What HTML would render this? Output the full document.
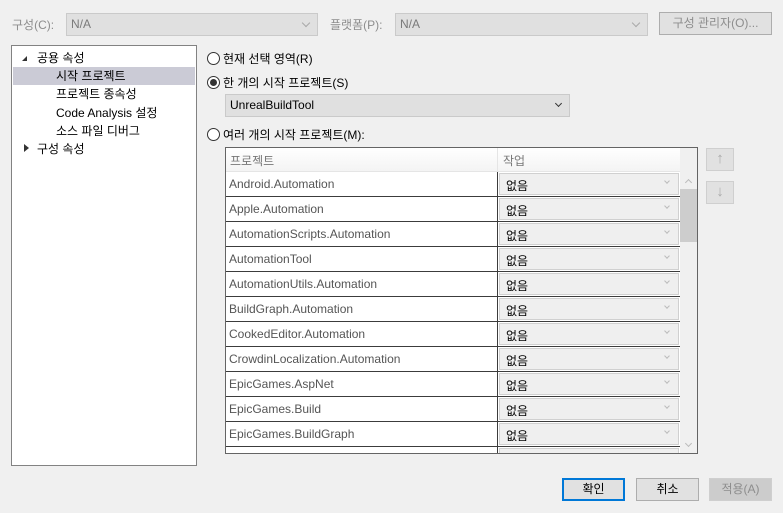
<!DOCTYPE html><html><head><meta charset="utf-8"><style>
*{box-sizing:border-box;margin:0;padding:0}
body{width:783px;height:513px;background:#f0f0f0;font-family:"Liberation Sans","Noto Sans CJK KR",sans-serif;font-size:12px;color:#000;position:relative;overflow:hidden}
.a{position:absolute;white-space:nowrap}
.dis{color:#8d8d8d}
.combo{position:absolute;background:#e0e0e0;border:1px solid #cacaca;height:23px;padding:3px 4px;color:#7a7a7a}
.chev{position:absolute;right:8px;top:6px;width:6px;height:6px;border-right:1px solid #a8a8a8;border-bottom:1px solid #a8a8a8;transform:rotate(45deg)}
.radio{position:absolute;width:13px;height:13px;border:1px solid #333;border-radius:50%;background:#fff}
.radio.on::after{content:"";position:absolute;left:2px;top:2px;width:7px;height:7px;border-radius:50%;background:#333}
.btn{position:absolute;height:23px;background:#e1e1e1;border:1px solid #adadad;text-align:center;line-height:21px}
.row{position:absolute;left:226px;width:454px;height:25px;border-bottom:1px solid #3c3c3c;background:#fff;overflow:hidden}
.row .n{position:absolute;left:3px;top:5px;color:#555}
.row .c{position:absolute;left:271px;top:0;width:1px;height:25px;background:#3c3c3c}
.row .d{position:absolute;left:273px;top:1px;width:180px;height:22px;background:#efefef;border:1px solid #d0d0d0;padding:3px 6px}
.row .d i{position:absolute;right:9px;top:5px;width:4px;height:4px;border-right:1px solid #bbb;border-bottom:1px solid #bbb;transform:rotate(45deg)}
</style></head><body>
<div class="a dis" style="left:12px;top:16px">구성(C):</div>
<div class="combo" style="left:66px;top:13px;width:252px">N/A<span class="chev"></span></div>
<div class="a dis" style="left:330px;top:16px">플랫폼(P):</div>
<div class="combo" style="left:395px;top:13px;width:253px">N/A<span class="chev"></span></div>
<div class="btn dis" style="left:659px;top:12px;width:113px">구성 관리자(O)...</div>

<div class="a" style="left:11px;top:45px;width:186px;height:421px;background:#fff;border:1px solid #828282"></div>
<div class="a" style="left:13px;top:67px;width:182px;height:18px;background:#cbcbd6"></div>
<div class="a" style="left:22px;top:56px;width:0;height:0;border-left:5px solid transparent;border-bottom:5px solid #333"></div>
<div class="a" style="left:37px;top:49px">공용 속성</div>
<div class="a" style="left:56px;top:67px">시작 프로젝트</div>
<div class="a" style="left:56px;top:85px">프로젝트 종속성</div>
<div class="a" style="left:56px;top:104px">Code Analysis 설정</div>
<div class="a" style="left:56px;top:122px">소스 파일 디버그</div>
<div class="a" style="left:24px;top:144px;width:0;height:0;border-top:4px solid transparent;border-bottom:4px solid transparent;border-left:5px solid #333"></div>
<div class="a" style="left:37px;top:140px">구성 속성</div>

<div class="radio" style="left:207px;top:52px"></div>
<div class="a" style="left:223px;top:50px">현재 선택 영역(R)</div>
<div class="radio on" style="left:207px;top:76px"></div>
<div class="a" style="left:223px;top:74px">한 개의 시작 프로젝트(S)</div>
<div class="combo" style="left:225px;top:94px;width:345px;height:23px;color:#000">UnrealBuildTool<span class="chev" style="border-color:#333;width:5px;height:5px"></span></div>
<div class="radio" style="left:207px;top:128px"></div>
<div class="a" style="left:223px;top:126px">여러 개의 시작 프로젝트(M):</div>

<div class="a" style="left:225px;top:147px;width:473px;height:307px;border:1px solid #646464;background:#f0f0f0;overflow:hidden"></div>
<div class="a" style="left:226px;top:148px;width:454px;height:24px;background:linear-gradient(#fff,#f4f4f4);border-bottom:1px solid #e5e5e5"></div>
<div class="a" style="left:497px;top:148px;width:1px;height:24px;background:#e5e5e5"></div>
<div class="a" style="left:230px;top:152px;color:#777">프로젝트</div>
<div class="a" style="left:503px;top:152px;color:#777">작업</div>
<div class="a" style="left:680px;top:172px;width:17px;height:281px;background:#f0f0f0"></div>
<div class="a" style="left:680px;top:189px;width:17px;height:53px;background:#cdcdcd"></div>
<div class="a" style="left:686px;top:180px;width:5px;height:5px;border-left:1px solid #bbb;border-top:1px solid #bbb;transform:rotate(45deg)"></div>
<div class="a" style="left:686px;top:441px;width:5px;height:5px;border-right:1px solid #bbb;border-bottom:1px solid #bbb;transform:rotate(45deg)"></div>

<div class="row" style="top:172px"><span class="n">Android.Automation</span><span class="c"></span><span class="d">없음<i></i></span></div>
<div class="row" style="top:197px"><span class="n">Apple.Automation</span><span class="c"></span><span class="d">없음<i></i></span></div>
<div class="row" style="top:222px"><span class="n">AutomationScripts.Automation</span><span class="c"></span><span class="d">없음<i></i></span></div>
<div class="row" style="top:247px"><span class="n">AutomationTool</span><span class="c"></span><span class="d">없음<i></i></span></div>
<div class="row" style="top:272px"><span class="n">AutomationUtils.Automation</span><span class="c"></span><span class="d">없음<i></i></span></div>
<div class="row" style="top:297px"><span class="n">BuildGraph.Automation</span><span class="c"></span><span class="d">없음<i></i></span></div>
<div class="row" style="top:322px"><span class="n">CookedEditor.Automation</span><span class="c"></span><span class="d">없음<i></i></span></div>
<div class="row" style="top:347px"><span class="n">CrowdinLocalization.Automation</span><span class="c"></span><span class="d">없음<i></i></span></div>
<div class="row" style="top:372px"><span class="n">EpicGames.AspNet</span><span class="c"></span><span class="d">없음<i></i></span></div>
<div class="row" style="top:397px"><span class="n">EpicGames.Build</span><span class="c"></span><span class="d">없음<i></i></span></div>
<div class="row" style="top:422px"><span class="n">EpicGames.BuildGraph</span><span class="c"></span><span class="d">없음<i></i></span></div>
<div class="row" style="top:447px;height:6px;border:none"><span class="c" style="height:6px"></span><span class="d" style="height:6px"></span></div>

<div class="a" style="left:706px;top:148px;width:28px;height:23px;background:#e1e1e1;border:1px solid #cfcfcf;text-align:center;color:#aaa;font-size:15px;line-height:20px">↑</div>
<div class="a" style="left:706px;top:181px;width:28px;height:23px;background:#e1e1e1;border:1px solid #cfcfcf;text-align:center;color:#aaa;font-size:15px;line-height:20px">↓</div>

<div class="btn" style="left:562px;top:478px;width:63px;border:2px solid #0078d7;line-height:19px">확인</div>
<div class="btn" style="left:636px;top:478px;width:63px">취소</div>
<div class="btn dis" style="left:709px;top:478px;width:63px;border-color:#cfcfcf;background:#ccc">적용(A)</div>
</body></html>
